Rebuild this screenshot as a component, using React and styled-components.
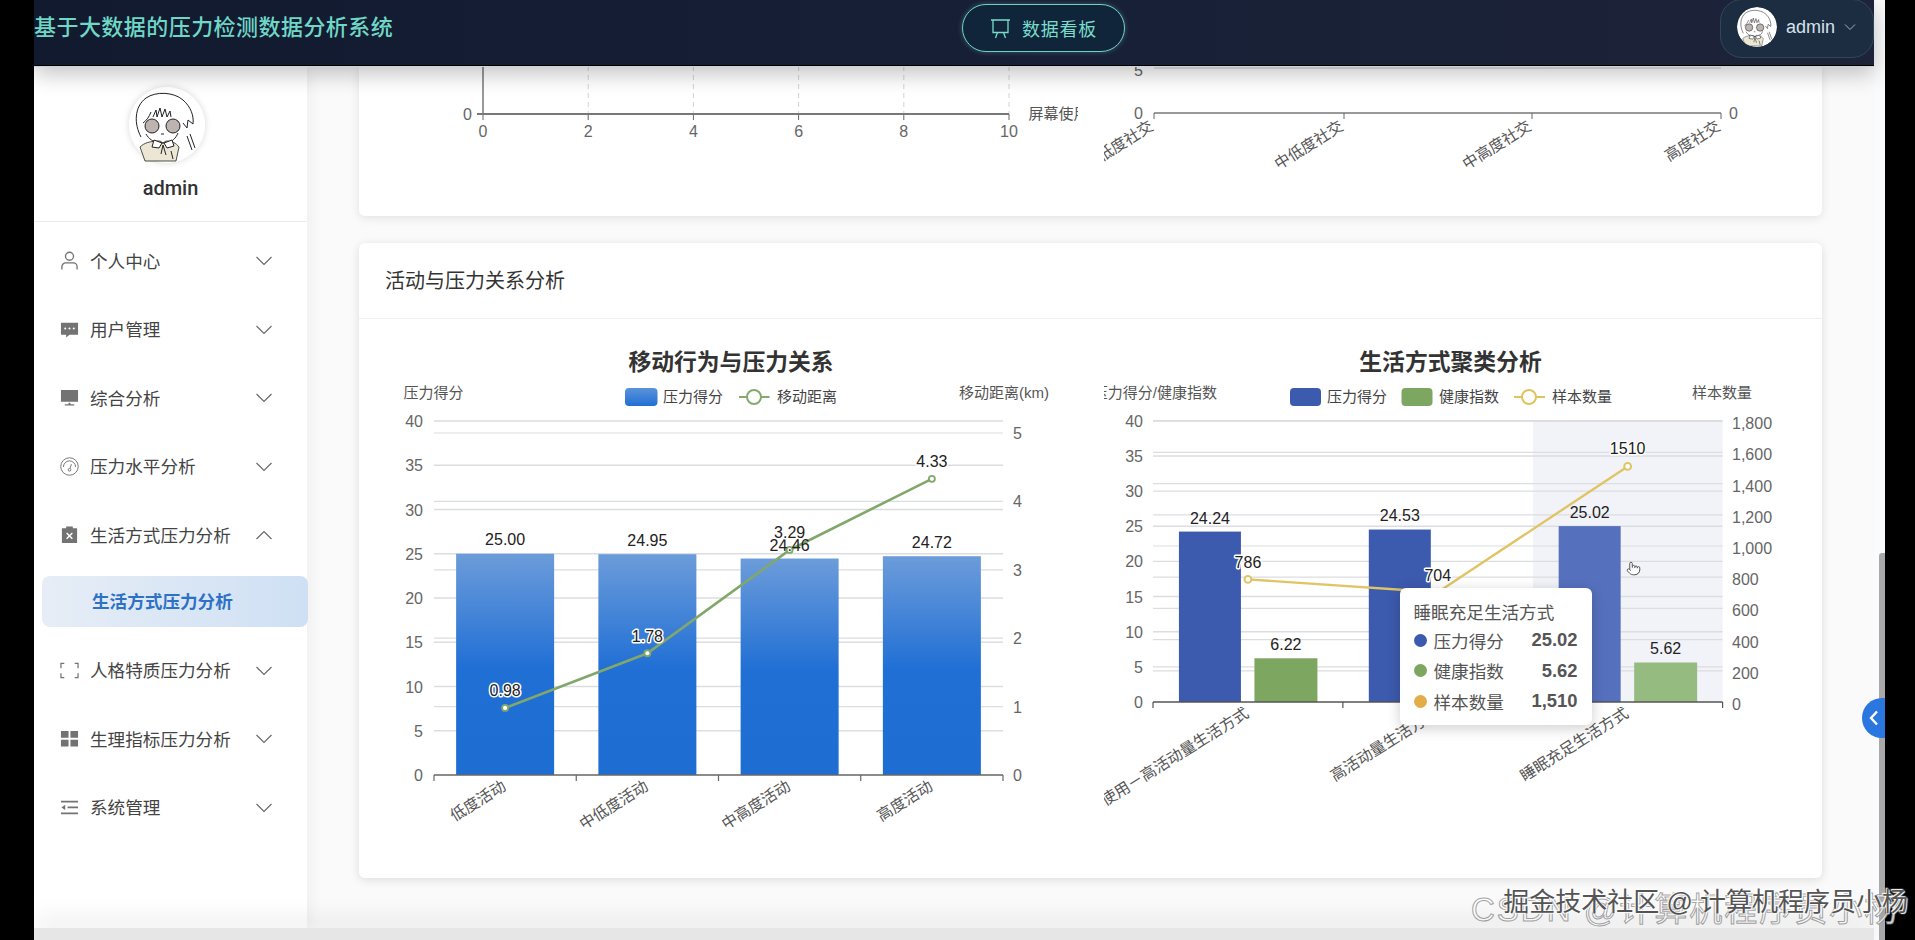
import styled, { createGlobalStyle } from "styled-components";
import { Pointer } from "lucide-react";

const GlobalStyle = createGlobalStyle`
  html, body { margin: 0; padding: 0; background: #000; overflow: hidden; }
  body { font-family: "Liberation Sans", "Noto Sans CJK SC", sans-serif; }
`;

const menus = [
  { label: "个人中心", icon: "user" },
  { label: "用户管理", icon: "chat" },
  { label: "综合分析", icon: "monitor" },
  { label: "压力水平分析", icon: "gauge" },
  { label: "生活方式压力分析", icon: "clipboard", open: true, child: "生活方式压力分析" },
  { label: "人格特质压力分析", icon: "frame" },
  { label: "生理指标压力分析", icon: "grid" },
  { label: "系统管理", icon: "list" },
];

const MenuIcon = ({ name }) => {
  const c = "#737373";
  switch (name) {
    case "user":
      return (
        <IconSvg viewBox="0 0 20 20" fill="none" stroke={c} strokeWidth="1.4">
          <circle cx="10" cy="5.5" r="4.2" />
          <path d="M2 19.5v-3a4 4 0 0 1 4-4h8a4 4 0 0 1 4 4v3" />
        </IconSvg>
      );
    case "chat":
      return (
        <IconSvg viewBox="0 0 20 20">
          <path fill={c} d="M1 3h18v12.5h-9L6.5 18.5v-3H1z" />
          <circle cx="5.5" cy="9" r="1.1" fill="#fff" />
          <circle cx="10" cy="9" r="1.1" fill="#fff" />
          <circle cx="14.5" cy="9" r="1.1" fill="#fff" />
        </IconSvg>
      );
    case "monitor":
      return (
        <IconSvg viewBox="0 0 20 20">
          <path fill={c} d="M1 2h18v12.5H1zM9 15.5h2v1.7h4v1.3H5v-1.3h4z" />
        </IconSvg>
      );
    case "gauge":
      return (
        <IconSvg viewBox="0 0 20 20" fill="none" stroke={c} strokeWidth="1">
          <circle cx="10" cy="10" r="9.2" />
          <path d="M3.6 10.5a6.4 6.4 0 0 1 12.8 0" />
          <circle cx="10" cy="13.5" r="1.4" />
          <path d="M10.5 12.2 12 7.5" />
        </IconSvg>
      );
    case "clipboard":
      return (
        <IconSvg viewBox="0 0 20 20">
          <path fill={c} d="M2 3.5h4.5V1.5h7v2H18V19H2z" />
          <path stroke="#fff" strokeWidth="1.5" d="M7 8.5l6 6M13 8.5l-6 6" />
        </IconSvg>
      );
    case "frame":
      return (
        <IconSvg viewBox="0 0 20 20" fill="none" stroke={c} strokeWidth="1.3">
          <path d="M4.5 2.5H1v5M15.5 2.5H19v5M1 13v4.5h3.5M19 13v4.5h-3.5" />
        </IconSvg>
      );
    case "grid":
      return (
        <IconSvg viewBox="0 0 20 20">
          <path fill={c} d="M1 2h8v7.2H1zM11 2h8v7.2h-8zM1 11.2h8v7.2H1zM11 11.2h8v7.2h-8z" />
        </IconSvg>
      );
    default:
      return (
        <IconSvg viewBox="0 0 20 20">
          <path fill={c} d="M1 3h18v1.8H1zM8 9h11v1.8H8zM1 15.2h18V17H1zM5.5 7.2v5.4L1.5 10z" />
        </IconSvg>
      );
  }
};

const Chevron = ({ up }) => (
  <ChevronSvg viewBox="0 0 16 10" fill="none" stroke="#666" strokeWidth="1.1">
    <path d={up ? "M.5 9 8 1.5 15.5 9" : "M.5 1 8 8.5 15.5 1"} />
  </ChevronSvg>
);

// cartoon girl used as the profile picture
const Portrait = () => (
  <svg viewBox="0 0 76 76" width="100%" height="100%">
    <circle cx="38" cy="38" r="38" fill="#fff" />
    <path fill="#ece7d4" stroke="#222" strokeWidth="0.8" d="M11 60c4-4 10-6 20-6l3 2 3-2c6 0 10 2 13 6l-3 14H16z" />
    <g fill="none" stroke="#222" strokeWidth="1">
      <path d="M12 50c-7-13-7-30 5-39 10-7 28-6 37 2 8 7 11 16 10 24l-5-4-1 8-4-5" />
      <path d="M14 36c4-3 6-6 8-11M24 30l3-7 1 7 3-9 2 9 3-8 2 8 3-6 1 6" />
      <path d="M17 47c3 5 7 8 13 9h8c5-1 9-5 11-10" />
      <path d="M32 47h3" />
      <path fill="#fff" d="M33 56l-8-3-2 7 7 1zM35 56l8-3 2 6-7 2z" />
      <path d="M34 58l-2 9M34 58l3 10M42 64l2 8" />
      <path d="M58 49l5 14M61 47l5 14" />
    </g>
    <circle cx="23" cy="39" r="7" fill="#bdb3b0" stroke="#222" strokeWidth="1" />
    <circle cx="44" cy="39" r="7" fill="#bdb3b0" stroke="#222" strokeWidth="1" />
  </svg>
);

const grey = "#dcdde0";
const ticksL = [0, 5, 10, 15, 20, 25, 30, 35, 40];

const Rotated = ({ x, y, children }) => (
  <CategoryLabel x={x} y={y} textAnchor="end" transform={`rotate(-32 ${x} ${y})`}>
    {children}
  </CategoryLabel>
);

const TopLeftChart = () => {
  const xs = [0, 2, 4, 6, 8, 10];
  const px = (v) => 98 + v * 52.6;
  return (
    <ChartSvg height={150}>
      {xs.map((v) => (
        <g key={v}>
          {v > 0 && <line x1={px(v)} x2={px(v)} y1="0" y2="48" stroke="#d4d4d4" strokeDasharray="5 4" />}
          <line x1={px(v)} x2={px(v)} y1="48" y2="54" stroke="#666" />
          <Tick x={px(v)} y="71" textAnchor="middle">{v}</Tick>
        </g>
      ))}
      <line x1="98" x2="98" y1="0" y2="48" stroke="#777" strokeWidth="1.5" />
      <line x1="92" x2="624" y1="48" y2="48" stroke="#777" strokeWidth="2" />
      <Tick x="87" y="54" textAnchor="end">0</Tick>
      <AxisName x="643.6" y="53">屏幕使用时间</AxisName>
    </ChartSvg>
  );
};

const TopRightChart = () => (
  <ChartSvg height={150}>
    <line x1="50" x2="617" y1="2" y2="2" stroke={grey} strokeWidth="1.5" />
    <line x1="50" x2="617" y1="47" y2="47" stroke="#777" strokeWidth="1.5" />
    {[50, 240, 428, 617].map((x) => (
      <line key={x} x1={x} x2={x} y1="47" y2="53" stroke="#666" />
    ))}
    <Tick x="39" y="10" textAnchor="end">5</Tick>
    <Tick x="39" y="53" textAnchor="end">0</Tick>
    <Tick x="625" y="53">0</Tick>
    <Rotated x="50.5" y="63">低度社交</Rotated>
    <Rotated x="240.5" y="63">中低度社交</Rotated>
    <Rotated x="428.5" y="63">中高度社交</Rotated>
    <Rotated x="617.5" y="63">高度社交</Rotated>
  </ChartSvg>
);

const activity = [
  { name: "低度活动", score: 25.0, dist: 0.98, scoreY: 199, distY: 350 },
  { name: "中低度活动", score: 24.95, dist: 1.78, scoreY: 200, distY: 296 },
  { name: "中高度活动", score: 24.46, dist: 3.29, scoreY: 205, distY: 192 },
  { name: "高度活动", score: 24.72, dist: 4.33, scoreY: 202, distY: 121 },
];

const MoveChart = () => {
  const left = 49;
  const right = 618;
  const bottom = 435;
  const cat = (right - left) / 4;
  const yL = (v) => bottom - v * 8.85;
  const yR = (v) => bottom - v * 68.4;
  const cx = (i) => left + cat * (i + 0.5);
  const points = activity.map((d, i) => `${cx(i)},${yR(d.dist)}`).join(" ");
  return (
    <ChartSvg height={537}>
      <defs>
        <linearGradient id="blueBar" x1="0" y1="0" x2="0" y2="1">
          <stop offset="0" stopColor="#6c9cda" />
          <stop offset="0.52" stopColor="#206fd5" />
          <stop offset="1" stopColor="#1e6dd3" />
        </linearGradient>
        <linearGradient id="blueSwatch" x1="0" y1="0" x2="0" y2="1">
          <stop offset="0" stopColor="#5b93d9" />
          <stop offset="1" stopColor="#206fd5" />
        </linearGradient>
      </defs>
      <ChartTitle x="346" y="30">移动行为与压力关系</ChartTitle>
      <AxisName x="18.6" y="58">压力得分</AxisName>
      <AxisName x="664" y="58" textAnchor="end">移动距离(km)</AxisName>

      <rect x="240" y="48" width="32.5" height="18" rx="4" fill="url(#blueSwatch)" />
      <LegendText x="278" y="62">压力得分</LegendText>
      <line x1="354" x2="384.5" y1="57" y2="57" stroke="#86a96d" strokeWidth="2" />
      <circle cx="369" cy="57" r="7" fill="#fff" stroke="#86a96d" strokeWidth="2" />
      <LegendText x="392" y="62">移动距离</LegendText>

      {ticksL.map((v) => (
        <g key={v}>
          {v > 0 && <line x1={left} x2={right} y1={yL(v)} y2={yL(v)} stroke={grey} strokeWidth="1.4" />}
          <Tick x="38" y={yL(v) + 6} textAnchor="end">{v}</Tick>
        </g>
      ))}
      {[0, 1, 2, 3, 4, 5].map((v) => (
        <g key={v}>
          {v > 0 && <line x1={left} x2={right} y1={yR(v)} y2={yR(v)} stroke={grey} strokeWidth="1.2" />}
          <Tick x="628" y={yR(v) + 6}>{v}</Tick>
        </g>
      ))}

      {activity.map((d, i) => (
        <rect key={d.name} x={cx(i) - 49} y={yL(d.score)} width="98" height={bottom - yL(d.score)} fill="url(#blueBar)" />
      ))}

      <line x1={left} x2={right} y1={bottom} y2={bottom} stroke="#666" strokeWidth="1.5" />
      {[0, 1, 2, 3, 4].map((i) => (
        <line key={i} x1={left + cat * i} x2={left + cat * i} y1={bottom} y2={bottom + 6} stroke="#666" strokeWidth="1.2" />
      ))}

      <polyline points={points} fill="none" stroke="#82a76b" strokeWidth="2.6" />
      {activity.map((d, i) => (
        <circle key={d.name} cx={cx(i)} cy={yR(d.dist)} r="3" fill="#fff" stroke="#82a76b" strokeWidth="1.8" />
      ))}

      {activity.map((d, i) => (
        <g key={d.name}>
          <DataLabel x={cx(i)} y={d.scoreY + 5.5}>{d.score.toFixed(2)}</DataLabel>
          <DataLabel $halo x={cx(i)} y={d.distY + 5.5}>{d.dist.toFixed(2)}</DataLabel>
          <Rotated x={cx(i) + 2} y={bottom + 14}>{d.name}</Rotated>
        </g>
      ))}
    </ChartSvg>
  );
};

const clusters = [
  { name: "低屏幕使用－高活动量生活方式", score: 24.24, health: 6.22, count: 786, countY: 222, scoreY: 178, healthY: 304 },
  { name: "高活动量生活方式", score: 24.53, health: 6.1, count: 704, countY: 235, scoreY: 175, healthY: 304 },
  { name: "睡眠充足生活方式", score: 25.02, health: 5.62, count: 1510, countY: 108, scoreY: 172, healthY: 308, hover: true },
];

const ClusterChart = () => {
  const left = 49;
  const right = 618.6;
  const bottom = 362;
  const cat = (right - left) / 3;
  const yL = (v) => bottom - v * 7.03;
  const yR = (v) => bottom - v * 0.156;
  const cx = (i) => left + cat * (i + 0.5);
  const points = clusters.map((d, i) => `${cx(i)},${yR(d.count)}`).join(" ");
  return (
    <ChartSvg height={537}>
      <ChartTitle x="346.5" y="30">生活方式聚类分析</ChartTitle>
      <AxisName x="113" y="58" textAnchor="end">压力得分/健康指数</AxisName>
      <AxisName x="588" y="58">样本数量</AxisName>

      <rect x="186" y="48" width="31" height="18" rx="4" fill="#3c5aae" />
      <LegendText x="223" y="62">压力得分</LegendText>
      <rect x="297.5" y="48" width="31" height="18" rx="4" fill="#7da760" />
      <LegendText x="335" y="62">健康指数</LegendText>
      <line x1="410" x2="441" y1="57" y2="57" stroke="#e0c25f" strokeWidth="2" />
      <circle cx="425" cy="57" r="7" fill="#fff" stroke="#e0c25f" strokeWidth="2" />
      <LegendText x="448" y="62">样本数量</LegendText>

      <rect x="429" y="81" width="189.6" height="281" fill="#f1f3f8" />

      {ticksL.map((v) => (
        <g key={v}>
          {v > 0 && <line x1={left} x2={right} y1={yL(v)} y2={yL(v)} stroke={grey} strokeWidth="1.4" />}
          <Tick x="39" y={yL(v) + 6} textAnchor="end">{v}</Tick>
        </g>
      ))}
      {[0, 200, 400, 600, 800, 1000, 1200, 1400, 1600, 1800].map((v) => (
        <g key={v}>
          {v > 0 && <line x1={left} x2={right} y1={yR(v)} y2={yR(v)} stroke={grey} strokeWidth="1.2" />}
          <Tick x="628" y={yR(v) + 8}>{v.toLocaleString("en-US")}</Tick>
        </g>
      ))}

      {clusters.map((d, i) => (
        <g key={d.name}>
          <rect x={cx(i) - 69} y={yL(d.score)} width="62" height={bottom - yL(d.score)} fill={d.hover ? "#5570bd" : "#3c5aae"} />
          <rect x={cx(i) + 6.5} y={yL(d.health)} width="63" height={bottom - yL(d.health)} fill={d.hover ? "#96bb80" : "#7da760"} />
        </g>
      ))}

      <line x1={left} x2={right} y1={bottom} y2={bottom} stroke="#555" strokeWidth="1.5" />
      {[0, 1, 2, 3].map((i) => (
        <line key={i} x1={left + cat * i} x2={left + cat * i} y1={bottom} y2={bottom + 6} stroke="#555" strokeWidth="1.2" />
      ))}

      <polyline points={points} fill="none" stroke="#e0c566" strokeWidth="2.4" />
      {clusters.map((d, i) => (
        <circle key={d.name} cx={cx(i)} cy={yR(d.count)} r="3.4" fill="#fff" stroke="#e0c566" strokeWidth="2" />
      ))}

      {clusters.map((d, i) => (
        <g key={d.name}>
          <DataLabel x={cx(i) - 38} y={d.scoreY + 5.5}>{d.score.toFixed(2)}</DataLabel>
          <DataLabel x={cx(i) + 38} y={d.healthY + 5.5}>{d.health.toFixed(2)}</DataLabel>
          <DataLabel $halo x={cx(i)} y={d.countY + 5.5}>{d.count}</DataLabel>
          <Rotated x={cx(i) + 2} y={bottom + 14}>{d.name}</Rotated>
        </g>
      ))}

      <Pointer x="522" y="221" size={15} color="#555" fill="#fff" strokeWidth={1.6} />
    </ChartSvg>
  );
};

const tipRows = [
  { name: "压力得分", value: "25.02", color: "#3c5aae" },
  { name: "健康指数", value: "5.62", color: "#7da760" },
  { name: "样本数量", value: "1,510", color: "#e3ae4a" },
];

export default function App() {
  return (
    <Screen>
      <GlobalStyle />
      <Frame>
        <Page>
          <TopBar>
            <AppTitle>基于大数据的压力检测数据分析系统</AppTitle>
            <BoardButton>
              <svg width="21" height="21" viewBox="0 0 21 21" fill="none" stroke="#79dccb" strokeWidth="1.3">
                <path d="M1 2h19M3 2v12.5h15V2M7.5 14.5 5.5 20M13.5 14.5l2 5.5" />
              </svg>
              数据看板
            </BoardButton>
            <UserChip>
              <ChipAvatar><Portrait /></ChipAvatar>
              admin
              <svg width="12" height="8" viewBox="0 0 12 8" fill="none" stroke="#9fb4bd" strokeWidth="1">
                <path d="M1 1.5 6 6.5l5-5" />
              </svg>
            </UserChip>
          </TopBar>

          <Body>
            <Sidebar>
              <Profile>
                <ProfileAvatar><Portrait /></ProfileAvatar>
                <ProfileName>admin</ProfileName>
              </Profile>
              <Menu>
                {menus.map((m) => (
                  <li key={m.label}>
                    <MenuRow>
                      <MenuIcon name={m.icon} />
                      <MenuLabel>{m.label}</MenuLabel>
                      <Chevron up={m.open} />
                    </MenuRow>
                    {m.child && <SubItem>{m.child}</SubItem>}
                  </li>
                ))}
              </Menu>
            </Sidebar>

            <Main>
              <ClippedCard>
                <ChartGrid>
                  <ChartCell><TopLeftChart /></ChartCell>
                  <ChartCell><TopRightChart /></ChartCell>
                </ChartGrid>
              </ClippedCard>

              <Card>
                <CardHead>活动与压力关系分析</CardHead>
                <ChartGrid $pad>
                  <ChartCell><MoveChart /></ChartCell>
                  <ChartCell>
                    <ClusterChart />
                    <Tooltip>
                      <TipTitle>睡眠充足生活方式</TipTitle>
                      {tipRows.map((r) => (
                        <TipRow key={r.name}>
                          <TipDot $color={r.color} />
                          {r.name}
                          <TipValue>{r.value}</TipValue>
                        </TipRow>
                      ))}
                    </Tooltip>
                  </ChartCell>
                </ChartGrid>
              </Card>
            </Main>
          </Body>
          <BottomBand />
        </Page>

        <ScrollTrack><ScrollThumb /></ScrollTrack>
        <CollapseTab>
          <svg width="10" height="16" viewBox="0 0 10 16" fill="none" stroke="#fff" strokeWidth="2.4">
            <path d="M8 1.5 2 8l6 6.5" />
          </svg>
        </CollapseTab>
      </Frame>
      <MarkBack>CSDN @计算机程序员小杨</MarkBack>
      <MarkFront>掘金技术社区 @ 计算机程序员小杨</MarkFront>
    </Screen>
  );
}

const Screen = styled.div`
  position: relative;
  width: 1915px;
  height: 940px;
  background: #000;
  overflow: hidden;
  padding-left: 34px;
  box-sizing: border-box;
`;

const Frame = styled.div`
  position: relative;
  display: flex;
  width: 1851px;
  height: 940px;
  background: #fff;
`;

const Page = styled.div`
  display: flex;
  flex-direction: column;
  width: 1840px;
  height: 940px;
`;

const TopBar = styled.header`
  position: relative;
  z-index: 5;
  flex: none;
  box-sizing: border-box;
  height: 66px;
  display: flex;
  align-items: flex-start;
  background: linear-gradient(90deg, #121a30, #171f36 50%, #1d2439);
  border-bottom: 1px solid #000;
  box-shadow: 0 1px 0 #cfd2d6, 0 8px 22px rgba(0, 0, 0, 0.24);
`;

const AppTitle = styled.div`
  width: 928px;
  margin-top: 13px;
  font-size: 22px;
  line-height: 30px;
  letter-spacing: 0.45px;
  white-space: nowrap;
  color: #6fd7c6;
  font-weight: 500;
`;

const BoardButton = styled.div`
  display: flex;
  align-items: center;
  justify-content: center;
  gap: 11px;
  box-sizing: border-box;
  width: 163px;
  height: 48px;
  margin-top: 4px;
  border: 1.5px solid #73cfc4;
  border-radius: 24px;
  background: #10243a;
  color: #79dccb;
  font-size: 18px;
  letter-spacing: 0.8px;
  box-shadow: 0 0 5px rgba(111, 215, 198, 0.35);
`;

const UserChip = styled.div`
  display: flex;
  align-items: center;
  gap: 9px;
  box-sizing: border-box;
  width: 154px;
  height: 59px;
  margin-left: auto;
  margin-top: -1px;
  padding: 0 0 3px 16px;
  border: 1px solid #31465a;
  border-radius: 22px;
  background: #1c2d42;
  color: #d5e2e8;
  font-size: 18px;
`;

const ChipAvatar = styled.div`
  flex: none;
  width: 40px;
  height: 40px;
  overflow: hidden;
  border-radius: 50%;
`;

const Body = styled.div`
  flex: 1;
  min-height: 0;
  display: flex;
`;

const Sidebar = styled.aside`
  position: relative;
  z-index: 2;
  flex: none;
  width: 273px;
  background: #fff;
  box-shadow: 3px 0 14px rgba(0, 0, 0, 0.05);
`;

const Profile = styled.div`
  box-sizing: border-box;
  height: 156px;
  padding-top: 21px;
  display: flex;
  flex-direction: column;
  align-items: center;
  border-bottom: 1px solid #ececec;
`;

const ProfileAvatar = styled.div`
  width: 76px;
  height: 76px;
  margin-right: 8px;
  border-radius: 50%;
  box-shadow: 0 0 7px rgba(0, 0, 0, 0.16);
`;

const ProfileName = styled.div`
  margin-top: 14px;
  font-size: 20px;
  line-height: 22px;
  font-weight: 500;
  color: #333;
  font-family: Roboto, "Liberation Sans", sans-serif;
`;

const Menu = styled.ul`
  list-style: none;
  margin: 0;
  padding: 5px 0 0;
`;

const MenuRow = styled.div`
  display: flex;
  align-items: center;
  height: 68.5px;
  padding-left: 26px;
`;

const IconSvg = styled.svg`
  flex: none;
  width: 19px;
  height: 19px;
  margin-top: -1px;
`;

const MenuLabel = styled.span`
  flex: 1;
  margin: -2px 0 0 11px;
  font-size: 17.6px;
  color: #444;
  white-space: nowrap;
`;

const ChevronSvg = styled.svg`
  flex: none;
  width: 16px;
  height: 10px;
  margin-right: 35px;
`;

const SubItem = styled.div`
  box-sizing: border-box;
  width: 266px;
  height: 51px;
  margin: 6px 0 10px 8px;
  padding: 0 0 2px 50px;
  display: flex;
  align-items: center;
  border-radius: 8px;
  background: linear-gradient(90deg, #e6edf6, #cfe0f4);
  color: #2d72c4;
  font-size: 17.6px;
  font-weight: 700;
`;

const Main = styled.main`
  flex: 1;
  min-width: 0;
  padding: 0 52px;
  background: #fafafb;
  overflow: hidden;
`;

const ClippedCard = styled.section`
  height: 150px;
  background: #fff;
  border-radius: 0 0 6px 6px;
  box-shadow: 0 2px 10px rgba(0, 0, 0, 0.1);
`;

const Card = styled.section`
  margin-top: 27px;
  height: 635px;
  background: #fff;
  border-radius: 6px;
  box-shadow: 0 2px 10px rgba(0, 0, 0, 0.12);
`;

const CardHead = styled.div`
  box-sizing: border-box;
  height: 76px;
  padding: 0 0 2px 26px;
  display: flex;
  align-items: center;
  border-bottom: 1px solid #ebeef2;
  font-size: 20px;
  color: #333;
`;

const ChartGrid = styled.div`
  display: grid;
  grid-template-columns: 1fr 1fr;
  gap: 26px;
  padding: ${(p) => (p.$pad ? "21px" : "0")} 26px 0;
`;

const ChartCell = styled.div`
  position: relative;
  min-width: 0;
`;

const ChartSvg = styled.svg`
  display: block;
  width: 100%;
  overflow: hidden;
  height: ${(p) => p.height}px;
`;

const ChartTitle = styled.text`
  font-size: 22.8px;
  font-weight: 700;
  fill: #333;
  text-anchor: middle;
`;

const AxisName = styled.text`
  font-size: 15px;
  fill: #555;
`;

const LegendText = styled.text`
  font-size: 15px;
  fill: #444;
`;

const Tick = styled.text`
  font-size: 16px;
  fill: #666;
`;

const CategoryLabel = styled.text`
  font-size: 15.5px;
  fill: #555;
`;

const DataLabel = styled.text`
  font-size: 16px;
  fill: #222;
  text-anchor: middle;
  ${(p) => p.$halo && "stroke: #fff; stroke-width: 3px; paint-order: stroke; stroke-linejoin: round;"}
`;

const Tooltip = styled.div`
  position: absolute;
  left: 296px;
  top: 248px;
  box-sizing: border-box;
  width: 192px;
  height: 137px;
  padding: 14px 14px 0;
  border-radius: 6px;
  background: #fff;
  box-shadow: 0 3px 14px rgba(0, 0, 0, 0.2);
`;

const TipTitle = styled.div`
  margin-bottom: 1px;
  font-size: 17.6px;
  line-height: 22px;
  color: #555;
`;

const TipRow = styled.div`
  display: flex;
  align-items: center;
  height: 30.5px;
  font-size: 17.6px;
  color: #555;
`;

const TipDot = styled.span`
  width: 13px;
  height: 13px;
  margin-right: 7px;
  border-radius: 50%;
  background: ${(p) => p.$color};
`;

const TipValue = styled.span`
  margin-left: auto;
  font-size: 18.4px;
  font-weight: 700;
  color: #555;
`;

const BottomBand = styled.div`
  position: relative;
  z-index: 3;
  flex: none;
  height: 12px;
  background: #e6e6e7;
  box-shadow: 0 -8px 24px rgba(0, 0, 0, 0.1);
`;

const ScrollTrack = styled.div`
  flex: none;
  width: 11px;
  box-sizing: border-box;
  padding: 553px 0 0 5px;
  background: #fafbfc;
`;

const ScrollThumb = styled.div`
  height: 100%;
  background: #a9a9a9;
  border-radius: 3px 0 0 0;
`;

const CollapseTab = styled.div`
  position: absolute;
  right: 0;
  top: 698px;
  width: 23px;
  height: 40px;
  display: flex;
  align-items: center;
  justify-content: center;
  border-radius: 20px 0 0 20px;
  background: #2b77e0;
`;

const MarkBack = styled.div`
  position: absolute;
  left: 1471px;
  top: 890px;
  font-size: 33px;
  line-height: 40px;
  letter-spacing: 2px;
  white-space: nowrap;
  color: rgba(255, 255, 255, 0.85);
  -webkit-text-stroke: 1px rgba(135, 135, 135, 0.75);
`;

const MarkFront = styled.div`
  position: absolute;
  right: 7px;
  top: 884px;
  font-size: 26px;
  line-height: 36px;
  white-space: nowrap;
  color: #555;
  text-shadow: 0 0 2px #fff, 1px 1px 1px #fff, -1px -1px 1px #fff;
`;
